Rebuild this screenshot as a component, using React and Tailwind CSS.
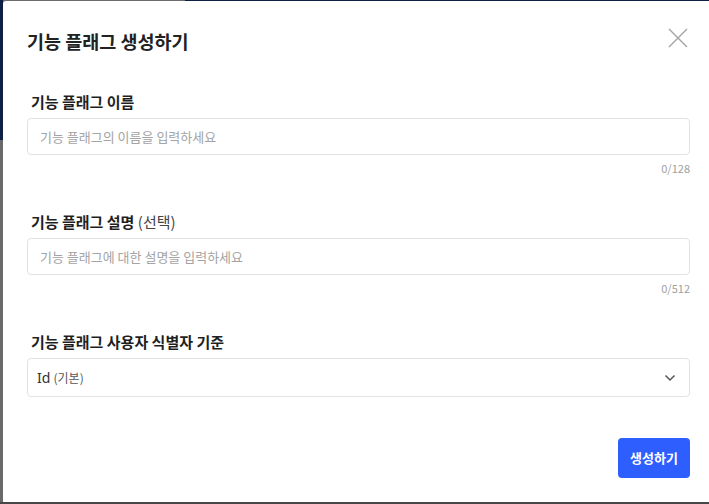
import React from "react";

const Counter = ({ text }) => (
  <div className="mt-[5px] text-right text-[11px] leading-4 text-[#a0a0a0]">{text}</div>
);

const Label = ({ children }) => (
  <div className="mb-[6px] pl-1 text-[15px] font-bold leading-5 text-[#1f1f1f]">{children}</div>
);

const TextInput = ({ placeholder }) => (
  <input
    className="box-border h-[37px] w-full rounded-[4px] border border-[#e2e2e2] bg-white px-3 text-[13px] text-[#333] outline-none placeholder:text-[#a3a3a3]"
    placeholder={placeholder}
  />
);

export default function App() {
  return (
    <div
      className="relative h-[504px] w-[709px] overflow-hidden bg-[#6a6a6a]"
      style={{ fontFamily: '"Noto Sans CJK KR", "Noto Sans", sans-serif' }}
    >
      <div className="absolute left-[185px] top-0 h-[2px] w-[524px] bg-[#0f1f45]" />
      <div className="absolute left-0 top-0 h-[140px] w-[3px] bg-[#0f1f45]" />
      <div className="absolute bottom-0 left-0 h-[2px] w-full bg-[#474747]" />

      <div className="absolute left-[3px] top-[1px] h-[501px] w-[711px] rounded-tl-[3px] bg-white px-6 pt-[26px]">
        <div className="flex items-center justify-between">
          <h2 className="text-[18.5px] font-bold leading-7 text-[#222]">기능 플래그 생성하기</h2>
          <svg className="-mt-[6px] mr-[2px]" width="20" height="20" viewBox="0 0 20 20" fill="none" stroke="#a3a3a3" strokeWidth="1.4">
            <path d="M1 1 L19 19 M19 1 L1 19" />
          </svg>
        </div>

        <div className="mt-[37px]">
          <Label>기능 플래그 이름</Label>
          <TextInput placeholder="기능 플래그의 이름을 입력하세요" />
          <Counter text="0/128" />
        </div>

        <div className="mt-[36px]">
          <Label>
            기능 플래그 설명 <span className="font-normal text-[#444]">(선택)</span>
          </Label>
          <TextInput placeholder="기능 플래그에 대한 설명을 입력하세요" />
          <Counter text="0/512" />
        </div>

        <div className="mt-[36px]">
          <Label>기능 플래그 사용자 식별자 기준</Label>
          <div className="flex h-[39px] items-center justify-between rounded-[4px] border border-[#e2e2e2] pl-[9px] pr-[13px]">
            <span className="text-[14px] text-[#333]">
              <span className="font-['Noto_Sans',sans-serif]">Id</span>{" "}
              <span className="text-[12px] text-[#555]">(기본)</span>
            </span>
            <svg width="12" height="8" viewBox="0 0 12 8" fill="none" stroke="#555" strokeWidth="1.5">
              <path d="M1.5 1.5 L6 6 L10.5 1.5" />
            </svg>
          </div>
        </div>

        <div className="mt-[41px] flex justify-end">
          <button className="h-[40px] w-[72px] rounded-[4px] bg-[#2f5eff] text-[13px] font-bold text-white">
            생성하기
          </button>
        </div>
      </div>
    </div>
  );
}
